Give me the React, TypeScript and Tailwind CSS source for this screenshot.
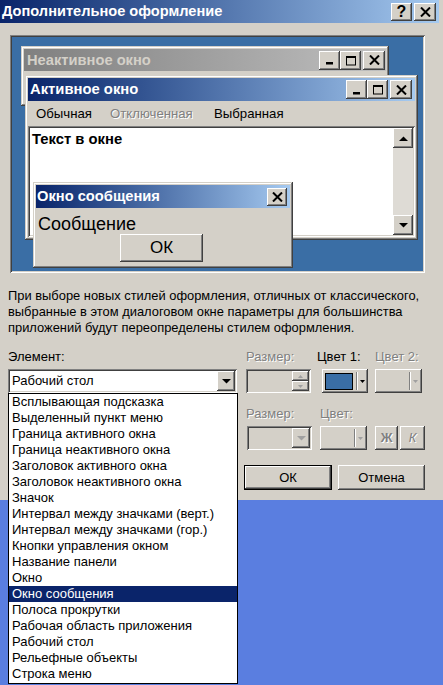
import React from "react";

const RAISED =
  "shadow-[inset_-1px_-1px_#404040,inset_1px_1px_#ffffff,inset_-2px_-2px_#808080,inset_2px_2px_#d4d0c8]";
const FRAME =
  "shadow-[inset_-1px_-1px_#404040,inset_1px_1px_#d4d0c8,inset_-2px_-2px_#808080,inset_2px_2px_#ffffff]";
const SUNKEN =
  "shadow-[inset_1px_1px_#808080,inset_-1px_-1px_#ffffff,inset_2px_2px_#404040,inset_-2px_-2px_#d4d0c8]";
const DIS = "text-[#808080] [text-shadow:1px_1px_0_#ffffff]";

function Btn({ className = "", children }: { className?: string; children?: React.ReactNode }) {
  return (
    <div className={`flex items-center justify-center bg-[#d4d0c8] shrink-0 ${RAISED} ${className}`}>
      {children}
    </div>
  );
}

const XIcon = () => (
  <svg width="11" height="10" viewBox="0 0 11 10">
    <path d="M1 0.5 L10 9.5 M10 0.5 L1 9.5" stroke="#000" strokeWidth="2" />
  </svg>
);
const MinIcon = () => (
  <svg width="11" height="10" viewBox="0 0 11 10">
    <rect x="2" y="7" width="7" height="2.5" fill="#000" />
  </svg>
);
const MaxIcon = () => (
  <svg width="12" height="11" viewBox="0 0 12 11">
    <rect x="1.5" y="1.5" width="9" height="8.5" fill="none" stroke="#000" />
    <rect x="1" y="1" width="10" height="2" fill="#000" />
  </svg>
);
const Down = ({ c = "#000" }: { c?: string }) => (
  <svg width="9" height="5" viewBox="0 0 9 5">
    <path d="M0 0H9L4.5 4.5Z" fill={c} />
  </svg>
);
const Up = ({ c = "#000" }: { c?: string }) => (
  <svg width="9" height="5" viewBox="0 0 9 5">
    <path d="M0 5H9L4.5 0.5Z" fill={c} />
  </svg>
);
const TinyDown = () => (
  <svg width="5" height="3" viewBox="0 0 5 3">
    <path d="M0 0H5L2.5 3Z" fill="#a0a0a0" />
  </svg>
);
const TinyUp = () => (
  <svg width="5" height="3" viewBox="0 0 5 3">
    <path d="M0 3H5L2.5 0Z" fill="#a0a0a0" />
  </svg>
);

const items = [
  "Всплывающая подсказка",
  "Выделенный пункт меню",
  "Граница активного окна",
  "Граница неактивного окна",
  "Заголовок активного окна",
  "Заголовок неактивного окна",
  "Значок",
  "Интервал между значками (верт.)",
  "Интервал между значками (гор.)",
  "Кнопки управления окном",
  "Название панели",
  "Окно",
  "Окно сообщения",
  "Полоса прокрутки",
  "Рабочая область приложения",
  "Рабочий стол",
  "Рельефные объекты",
  "Строка меню",
];

export default function App() {
  return (
    <div className="relative w-[443px] h-[685px] overflow-hidden bg-[#5a7ee0] font-['Liberation_Sans',Arial,sans-serif] text-[13px] text-black">
      <div className="w-[443px] h-[500px] bg-[#d4d0c8] flex flex-col">
        {/* Title bar */}
        <div className="h-[23px] w-[439px] flex items-center bg-linear-to-r from-[#0a246a] to-[#a6caf0] pl-[2px] pr-[3px]">
          <span className="flex-1 text-white font-bold text-[14.6px] leading-none">Дополнительное оформление</span>
          <Btn className="w-[21px] h-[18px]">
            <span className="font-bold text-[16px] leading-none">?</span>
          </Btn>
          <Btn className="w-[22px] h-[18px] ml-[2px]">
            <XIcon />
          </Btn>
        </div>

        {/* Preview */}
        <div className={`mt-[12px] ml-[10px] w-[415px] h-[238px] p-[2px] ${SUNKEN}`}>
          <div className="relative w-full h-full bg-[#3a6ea5]">
            {/* Inactive window */}
            <div className={`absolute left-[9px] top-[9px] w-[368px] h-[60px] bg-[#d4d0c8] p-[3px] ${FRAME}`}>
              <div className="h-[22px] flex items-center bg-linear-to-r from-[#808080] to-[#c0c0c0] pl-[3px] pr-[1px]">
                <span className="flex-1 text-[#d4d0c8] font-bold text-[14.7px] leading-none">Неактивное окно</span>
                <Btn className="w-[21px] h-[19px]">
                  <MinIcon />
                </Btn>
                <Btn className="w-[21px] h-[19px]">
                  <MaxIcon />
                </Btn>
                <Btn className="w-[22px] h-[19px] ml-[2px]">
                  <XIcon />
                </Btn>
              </div>
            </div>

            {/* Active window */}
            <div className={`absolute left-[13px] top-[38px] w-[393px] h-[165px] bg-[#d4d0c8] p-[3px] flex flex-col ${FRAME}`}>
              <div className="h-[23px] shrink-0 flex items-center bg-linear-to-r from-[#0a246a] to-[#a6caf0] pl-[2px] pr-[3px]">
                <span className="flex-1 text-white font-bold text-[14.8px] leading-none">Активное окно</span>
                <Btn className="w-[21px] h-[19px]">
                  <MinIcon />
                </Btn>
                <Btn className="w-[21px] h-[19px]">
                  <MaxIcon />
                </Btn>
                <Btn className="w-[22px] h-[19px] ml-[2px]">
                  <XIcon />
                </Btn>
              </div>
              <div className="h-[25px] shrink-0 flex items-center pl-[8px] text-[13.2px]">
                <span className="w-[74px] shrink-0">Обычная</span>
                <span className={`w-[104px] shrink-0 ${DIS}`}>Отключенная</span>
                <span>Выбранная</span>
              </div>
              <div className={`flex-1 flex bg-white p-[2px] ${SUNKEN}`}>
                <div className="flex-1 pl-[2px] pt-[3px] font-bold text-[14.8px] leading-[16px]">Текст в окне</div>
                <div className="w-[20px] flex flex-col justify-between bg-[#dedbd5]">
                  <Btn className="w-[20px] h-[20px]">
                    <Up />
                  </Btn>
                  <Btn className="w-[20px] h-[20px]">
                    <Down />
                  </Btn>
                </div>
              </div>
            </div>

            {/* Message box */}
            <div className={`absolute left-[21px] top-[145px] w-[260px] h-[86px] bg-[#d4d0c8] p-[3px] flex flex-col ${FRAME}`}>
              <div className="h-[23px] shrink-0 flex items-center bg-linear-to-r from-[#0a246a] to-[#a6caf0] pl-[1px] pr-[3px]">
                <span className="flex-1 text-white font-bold text-[14.7px] leading-none">Окно сообщения</span>
                <Btn className="w-[20px] h-[18px]">
                  <XIcon />
                </Btn>
              </div>
              <div className="mt-[6px] pl-[2px] text-[18px] leading-[20px]">Сообщение</div>
              <Btn className="ml-[84px] w-[83px] h-[28px] text-[17px]">ОК</Btn>
            </div>
          </div>
        </div>

        {/* Description */}
        <div className="mt-[15px] px-[8px] text-[12.9px] leading-[16px] whitespace-nowrap">
          При выборе новых стилей оформления, отличных от классического,
          <br />
          выбранные в этом диалоговом окне параметры для большинства
          <br />
          приложений будут переопределены стилем оформления.
        </div>

        {/* Labels row 1 */}
        <div className="mt-[13px] h-[16px] leading-[16px] flex pl-[8px]">
          <span className="w-[238px] shrink-0">Элемент:</span>
          <span className={`w-[71px] shrink-0 ${DIS}`}>Размер:</span>
          <span className="w-[58px] shrink-0">Цвет 1:</span>
          <span className={DIS}>Цвет 2:</span>
        </div>

        {/* Controls row 1 */}
        <div className="mt-[4px] h-[24px] flex pl-[8px]">
          <div className={`w-[229px] h-[24px] bg-white p-[2px] flex items-center ${SUNKEN}`}>
            <span className="flex-1 pl-[2px]">Рабочий стол</span>
            <Btn className="w-[18px] h-[20px]">
              <Down />
            </Btn>
          </div>
          <div className={`ml-[9px] w-[65px] h-[24px] bg-[#d4d0c8] p-[2px] flex justify-end ${SUNKEN}`}>
            <div className="w-[17px] flex flex-col">
              <Btn className="w-[17px] h-[10px]">
                <TinyUp />
              </Btn>
              <Btn className="w-[17px] h-[10px]">
                <TinyDown />
              </Btn>
            </div>
          </div>
          <Btn className="ml-[11px] w-[46px] h-[24px] !justify-start">
            <div className="ml-[3px] w-[28px] h-[17px] bg-[#3a6ea5] border border-black" />
            <div className="ml-[3px] w-[2px] h-[18px] border-l border-[#808080] bg-white" />
            <div className="ml-[2px]">
              <svg width="5" height="3" viewBox="0 0 5 3">
                <path d="M0 0H5L2.5 3Z" fill="#000" />
              </svg>
            </div>
          </Btn>
          <Btn className="ml-[7px] w-[47px] h-[24px] !justify-end">
            <div className="w-[2px] h-[18px] border-l border-[#808080] bg-white" />
            <div className="ml-[2px] mr-[4px]">
              <TinyDown />
            </div>
          </Btn>
        </div>

        {/* Labels row 2 */}
        <div className="mt-[13px] h-[16px] leading-[16px] flex pl-[246px]">
          <span className={`w-[74px] shrink-0 ${DIS}`}>Размер:</span>
          <span className={DIS}>Цвет:</span>
        </div>

        {/* Controls row 2 */}
        <div className="mt-[4px] h-[24px] flex pl-[247px]">
          <div className={`w-[65px] h-[24px] bg-[#d4d0c8] p-[2px] flex justify-end ${SUNKEN}`}>
            <Btn className="w-[18px] h-[20px]">
              <Down c="#a0a0a0" />
            </Btn>
          </div>
          <Btn className="ml-[8px] w-[47px] h-[24px] !justify-end">
            <div className="w-[2px] h-[18px] border-l border-[#808080] bg-white" />
            <div className="ml-[2px] mr-[4px]">
              <TinyDown />
            </div>
          </Btn>
          <Btn className={`ml-[8px] w-[23px] h-[24px] font-bold text-[13px] ${DIS}`}>Ж</Btn>
          <Btn className={`ml-[2px] w-[25px] h-[24px] italic text-[13px] ${DIS}`}>К</Btn>
        </div>

        {/* Buttons */}
        <div className="mt-[15px] h-[25px] flex pl-[244px]">
          <div className="w-[88px] h-[25px] border border-black">
            <Btn className="w-full h-full">ОК</Btn>
          </div>
          <Btn className="ml-[6px] w-[87px] h-[25px]">Отмена</Btn>
        </div>
      </div>

      {/* Dropdown list */}
      <div className="absolute left-[8px] top-[393px] w-[230px] h-[291px] border border-black bg-white">
        {items.map((t) => (
          <div
            key={t}
            className={`h-[16px] leading-[16px] pl-[3px] text-[13px] whitespace-nowrap ${
              t === "Окно сообщения" ? "bg-[#0a246a] text-white" : ""
            }`}
          >
            {t}
          </div>
        ))}
      </div>
    </div>
  );
}
